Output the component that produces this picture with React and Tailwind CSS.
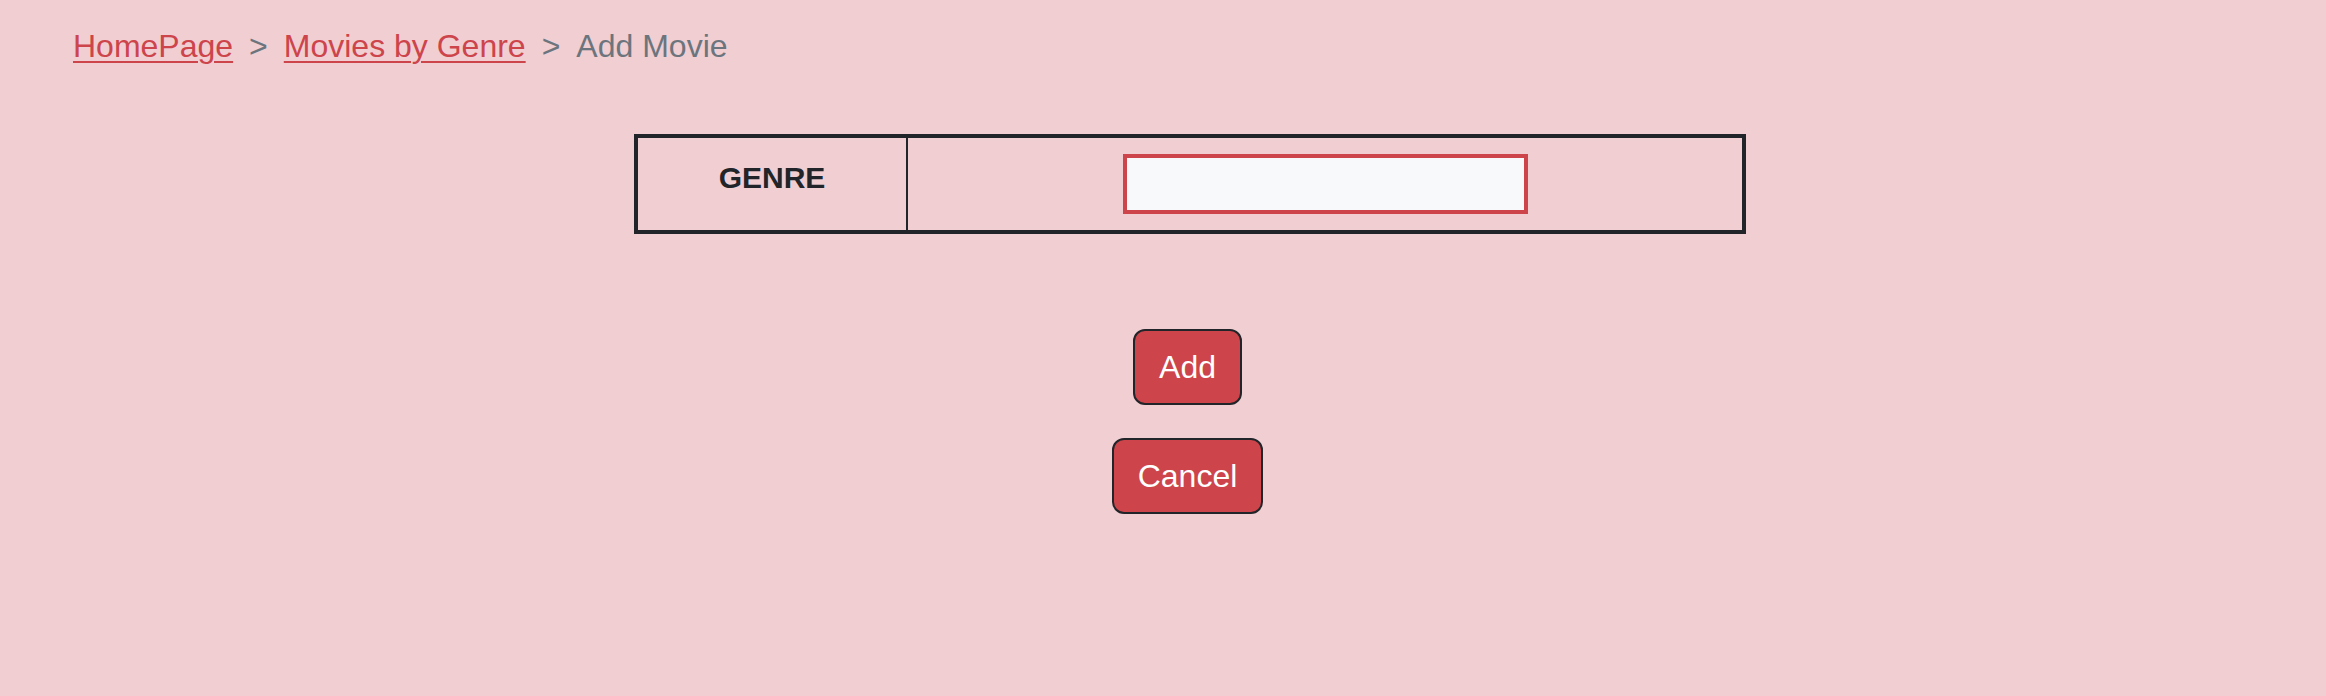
import React, { useState } from 'react';

const App = () => {
    const [genre, setGenre] = useState('');

    return (
        <div className="min-h-screen w-full bg-[#f0ced2] font-['Liberation_Sans',Arial,sans-serif] text-[32px] leading-[48px] text-[#212529]">
            <nav className="pt-[22px] pl-[73px] flex items-center">
                <a href="#" className="text-[#cd444b] underline underline-offset-[4px] decoration-2">HomePage</a>
                <span className="px-[16px] text-[#6c757d]">&gt;</span>
                <a href="#" className="text-[#cd444b] underline underline-offset-[4px] decoration-2">Movies by Genre</a>
                <span className="px-[16px] text-[#6c757d]">&gt;</span>
                <span className="text-[#6c757d]">Add Movie</span>
            </nav>

            <main className="flex flex-col items-center pl-[54px] pt-[64px]">
                <table className="w-[1112px] border-4 border-[#212529] border-collapse">
                    <tbody>
                        <tr>
                            <th className="w-[271px] border-r-2 border-[#212529] p-[16px] align-top font-bold text-center text-[30px]">GENRE</th>
                            <td className="p-[16px] align-top text-center">
                                <input
                                    type="text"
                                    value={genre}
                                    onChange={(e) => setGenre(e.target.value)}
                                    className="w-[405px] h-[60px] border-4 border-[#cd444b] bg-[#f8f9fa] px-2 outline-none"
                                />
                            </td>
                        </tr>
                    </tbody>
                </table>

                <button className="mt-[95px] mr-[5px] bg-[#cd444b] text-white border-2 border-[#212529] rounded-[12px] px-[24px] py-[12px]">
                    Add
                </button>
                <button className="mt-[33px] mr-[5px] bg-[#cd444b] text-white border-2 border-[#212529] rounded-[12px] px-[24px] py-[12px]">
                    Cancel
                </button>
            </main>
        </div>
    );
};

export default App;
